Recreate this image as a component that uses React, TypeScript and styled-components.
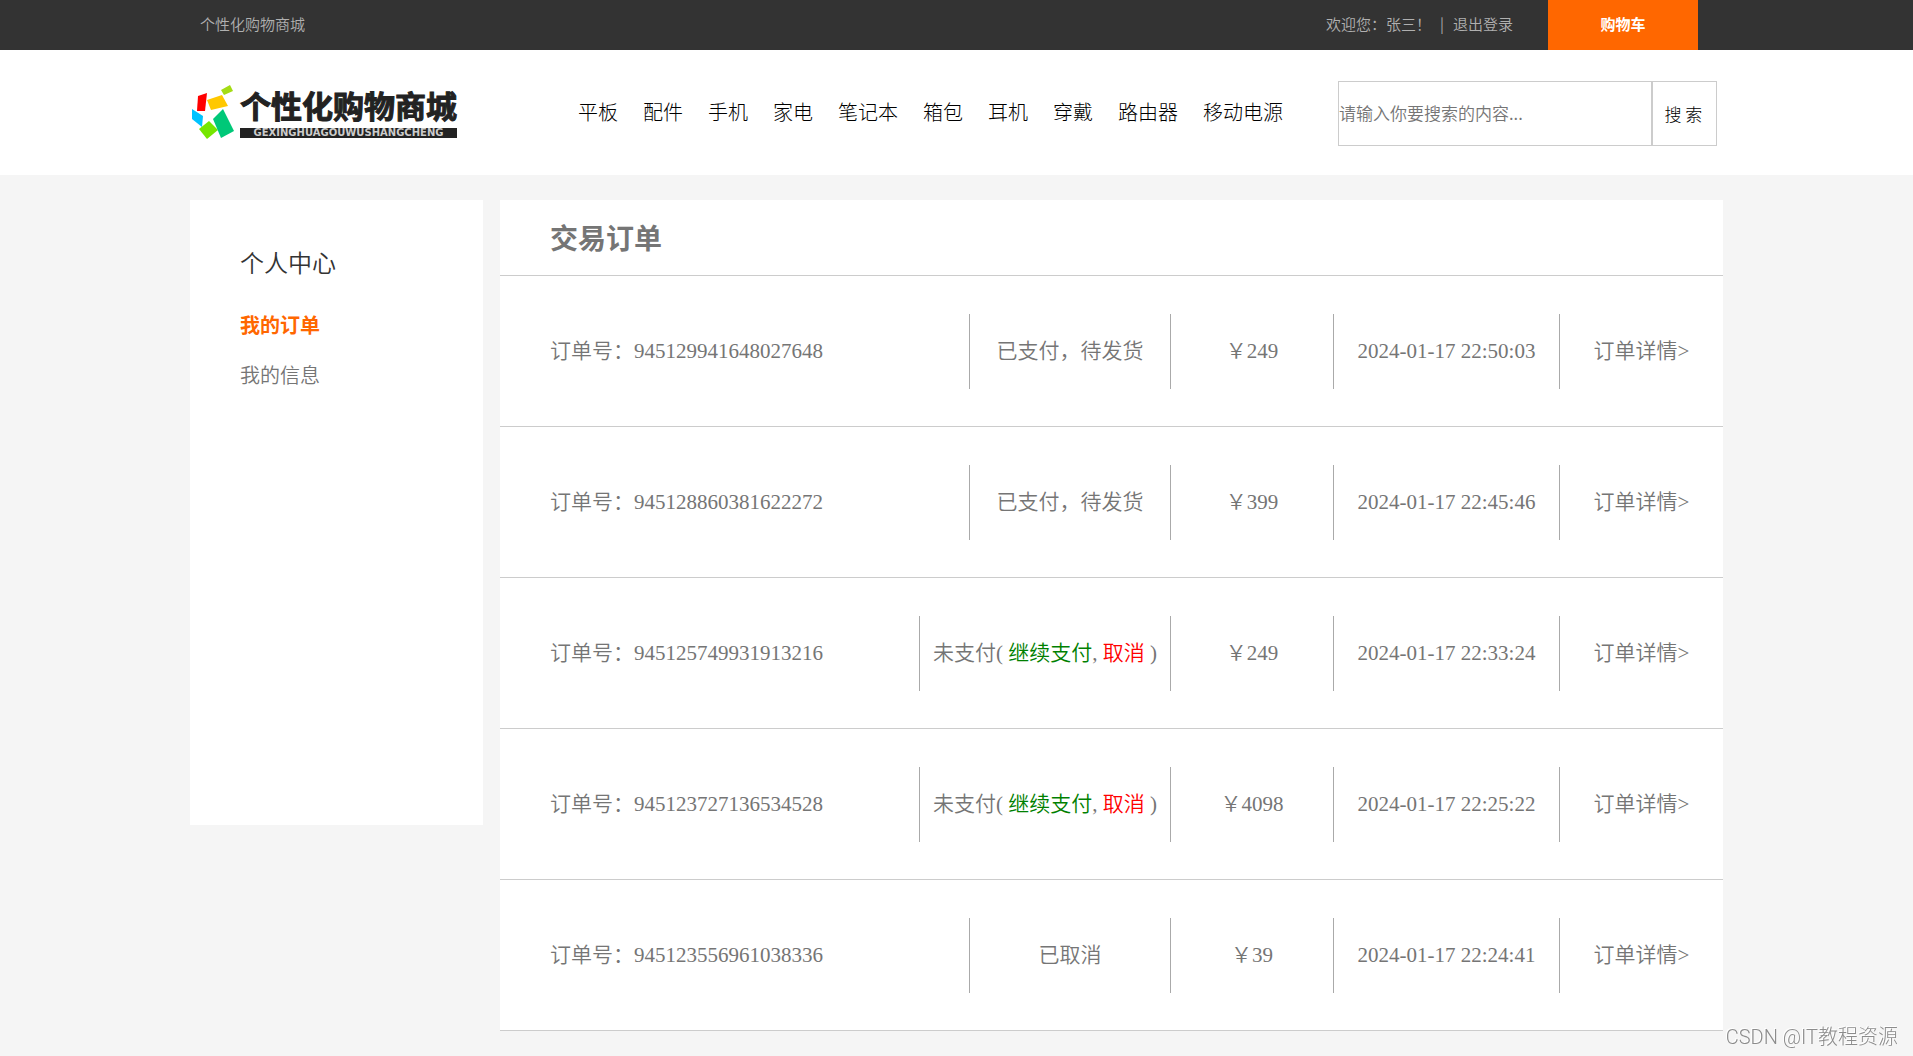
import React from "react";
import styled, { createGlobalStyle } from "styled-components";

const GlobalStyle = createGlobalStyle`
  *, *::before, *::after { box-sizing: border-box; }
  body {
    margin: 0;
    background: #f5f5f5;
    color: #757575;
    font-family: "Liberation Serif", "Noto Sans CJK SC", serif;
    font-weight: 350;
  }
  a { color: inherit; text-decoration: none; }
  ul { list-style: none; margin: 0; padding: 0; }
  h1, h2, p { margin: 0; }
`;

const sans = `"Noto Sans CJK SC", "Liberation Sans", sans-serif`;

const Page = styled.div`
  min-height: 100vh;
  padding-bottom: 25px;
`;

const Container = styled.div`
  width: 100%;
  max-width: 1533px;
  margin: 0 auto;
  display: flex;
`;

const TopBar = styled.div`
  background: #333;
  color: #b0b0b0;
  font-family: ${sans};
  font-size: 15px;
  line-height: 48px;
  height: 50px;
`;

const SiteName = styled.a`
  padding-left: 10px;
  margin-right: auto;
`;

const Account = styled.div`
  display: flex;
  margin-right: 35px;
`;

const Divider = styled.span`
  padding: 0 9px;
`;

const CartLink = styled.a`
  width: 150px;
  margin-right: 25px;
  background: #ff6700;
  color: #fff;
  font-weight: 700;
  height: 50px;
  text-align: center;
`;

const Header = styled.header`
  background: #fff;

  ${Container} {
    min-height: 125px;
    align-items: center;
  }
`;

const LogoLink = styled.a`
  display: flex;
  align-items: center;
  gap: 6px;
  margin-left: 2px;
  width: 266px;
  color: #222;
`;

const LogoText = styled.span`
  display: flex;
  flex-direction: column;
  gap: 5px;
`;

const LogoName = styled.span`
  font-family: ${sans};
  font-size: 31px;
  font-weight: 700;
  line-height: 36px;
  white-space: nowrap;
  -webkit-text-stroke: 1px #222;
`;

const LogoLatin = styled.span`
  background: #222;
  color: #ccc;
  font-family: "DejaVu Sans", sans-serif;
  font-size: 10px;
  font-weight: 700;
  line-height: 10px;
  text-align: center;
  white-space: nowrap;
`;

const Nav = styled.nav`
  margin-left: 120px;
  margin-bottom: 2px;

  ul {
    display: flex;
    gap: 25px;
  }
`;

const NavLink = styled.a`
  color: #000;
  font-family: ${sans};
  font-size: 20px;
  font-weight: 300;
  line-height: 30px;
`;

const Search = styled.form`
  display: flex;
  margin: 2px 6px 0 auto;
  height: 65px;
`;

const SearchInput = styled.input`
  width: 314px;
  padding: 0 0 2px;
  border: 1px solid #ccc;
  background: #fff;
  color: #333;
  font-family: ${sans};
  font-size: 17px;
  font-weight: 350;
  outline: none;

  &::placeholder { color: #757575; }
`;

const SearchButton = styled.button`
  width: 65px;
  padding: 0 2px 0 0;
  border: 1px solid #ccc;
  background: #fff;
  color: #000;
  font-family: ${sans};
  font-size: 17px;
  font-weight: 300;
  cursor: pointer;
`;

const Content = styled(Container)`
  margin-top: 25px;
  align-items: flex-start;
  gap: 17px;
`;

const Sidebar = styled.aside`
  flex: 0 0 293px;
  min-height: 625px;
  padding: 37px 50px;
  background: #fff;
  font-family: ${sans};
`;

const SidebarTitle = styled.h2`
  color: #333;
  font-size: 24px;
  font-weight: 350;
  line-height: 50px;
  margin-bottom: 13px;
`;

const SidebarLink = styled.a<{ $active?: boolean }>`
  display: block;
  font-size: 20px;
  line-height: 50px;
  color: ${(p) => (p.$active ? "#ff6700" : "#757575")};
  font-weight: ${(p) => (p.$active ? 700 : 350)};
`;

const Main = styled.main`
  flex: 1;
  min-width: 0;
  background: #fff;
`;

const Title = styled.h1`
  padding-left: 50px;
  border-bottom: 1px solid #ccc;
  font-family: ${sans};
  font-size: 28px;
  font-weight: 700;
  line-height: 75px;
`;

const Orders = styled.table`
  width: 100%;
  border-collapse: separate;
  border-spacing: 0;
  table-layout: fixed;
  font-size: 21px;
`;

const Cell = styled.td<{ $width?: number }>`
  width: ${(p) => (p.$width ? `${p.$width}px` : "auto")};
  height: 151px;
  padding: 0;
  border-bottom: 1px solid #ccc;
  white-space: nowrap;
`;

const OrderNumber = styled.div`
  padding-left: 50px;
  line-height: 75px;
`;

const Segment = styled.div<{ $width?: number }>`
  width: ${(p) => (p.$width ? `${p.$width}px` : "auto")};
  height: 75px;
  margin-left: auto;
  border-left: 1px solid #aaa;
  line-height: 75px;
  text-align: center;
`;

const Action = styled.a<{ $color: string }>`
  color: ${(p) => p.$color};
`;

const Watermark = styled.p`
  position: fixed;
  right: 15px;
  bottom: 4px;
  color: #8c8c8c;
  font-family: Roboto, "Noto Sans CJK SC", sans-serif;
  font-size: 20px;
  font-weight: 300;
  line-height: 30px;
  text-shadow: -1px -1px 0 #fff;
`;

type Status = "paid" | "unpaid" | "cancelled";

interface Order {
  id: string;
  status: Status;
  price: number;
  time: string;
}

const categories = ["平板", "配件", "手机", "家电", "笔记本", "箱包", "耳机", "穿戴", "路由器", "移动电源"];

const orders: Order[] = [
  { id: "945129941648027648", status: "paid", price: 249, time: "2024-01-17 22:50:03" },
  { id: "945128860381622272", status: "paid", price: 399, time: "2024-01-17 22:45:46" },
  { id: "945125749931913216", status: "unpaid", price: 249, time: "2024-01-17 22:33:24" },
  { id: "945123727136534528", status: "unpaid", price: 4098, time: "2024-01-17 22:25:22" },
  { id: "945123556961038336", status: "cancelled", price: 39, time: "2024-01-17 22:24:41" },
];

function LogoMark() {
  return (
    <svg width="42" height="55" viewBox="0 0 42 55" aria-hidden="true">
      <path d="M29 5 38 0 41 6 32 10Z" fill="#a4dc14" />
      <path d="M15 15 30 10 36 21 19 25Z" fill="#ffc800" />
      <path d="M6 11 15 8 13 26 5 26Z" fill="#ff0000" />
      <path d="M0 24 11 31 10 42 0 34Z" fill="#00c3ff" />
      <path d="M7 44 17 36 26 45 15 54Z" fill="#76e600" />
      <path d="M21 34 31 24 42 46 29 53Z" fill="#00c878" />
    </svg>
  );
}

function StatusText({ status }: { status: Status }) {
  if (status === "paid") return <>已支付，待发货</>;
  if (status === "cancelled") return <>已取消</>;
  return (
    <>
      未支付( <Action href="#pay" $color="#008000">继续支付</Action>,{" "}
      <Action href="#cancel" $color="#ff0000">取消</Action> )
    </>
  );
}

function OrderRow({ order }: { order: Order }) {
  return (
    <tr>
      <Cell>
        <OrderNumber>订单号：{order.id}</OrderNumber>
      </Cell>
      <Cell $width={251}>
        <Segment $width={order.status === "unpaid" ? 251 : 201}>
          <StatusText status={order.status} />
        </Segment>
      </Cell>
      <Cell $width={163}>
        <Segment>￥{order.price}</Segment>
      </Cell>
      <Cell $width={226}>
        <Segment>{order.time}</Segment>
      </Cell>
      <Cell $width={164}>
        <Segment>
          <a href="#detail">订单详情&gt;</a>
        </Segment>
      </Cell>
    </tr>
  );
}

export default function App() {
  return (
    <Page>
      <GlobalStyle />
      <TopBar>
        <Container>
          <SiteName href="#home">个性化购物商城</SiteName>
          <Account>
            <span>欢迎您：张三！</span>
            <Divider>|</Divider>
            <a href="#logout">退出登录</a>
          </Account>
          <CartLink href="#cart">购物车</CartLink>
        </Container>
      </TopBar>
      <Header>
        <Container>
          <LogoLink href="#home">
            <LogoMark />
            <LogoText>
              <LogoName>个性化购物商城</LogoName>
              <LogoLatin>GEXINGHUAGOUWUSHANGCHENG</LogoLatin>
            </LogoText>
          </LogoLink>
          <Nav>
            <ul>
              {categories.map((name) => (
                <li key={name}>
                  <NavLink href="#category">{name}</NavLink>
                </li>
              ))}
            </ul>
          </Nav>
          <Search>
            <SearchInput type="text" aria-label="搜索" placeholder="请输入你要搜索的内容..." />
            <SearchButton type="button">搜 索</SearchButton>
          </Search>
        </Container>
      </Header>
      <Content>
        <Sidebar>
          <SidebarTitle>个人中心</SidebarTitle>
          <ul>
            <li><SidebarLink href="#orders" $active>我的订单</SidebarLink></li>
            <li><SidebarLink href="#profile">我的信息</SidebarLink></li>
          </ul>
        </Sidebar>
        <Main>
          <Title>交易订单</Title>
          <Orders>
            <tbody>
              {orders.map((order) => (
                <OrderRow key={order.id} order={order} />
              ))}
            </tbody>
          </Orders>
        </Main>
      </Content>
      <Watermark>CSDN @IT教程资源</Watermark>
    </Page>
  );
}
